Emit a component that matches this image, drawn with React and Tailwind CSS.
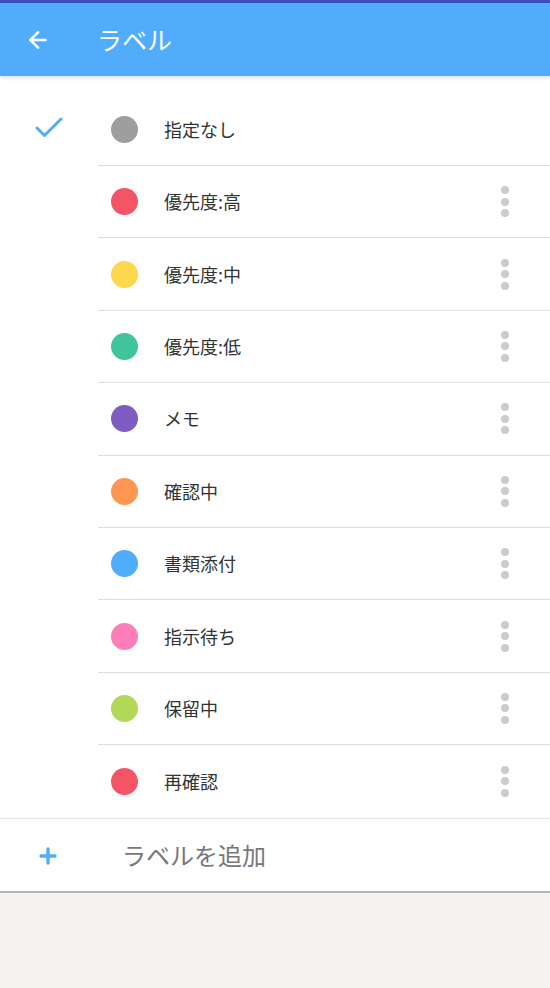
import { ArrowLeft, Check, Plus } from "lucide-react";

const labels = [
  { name: "優先度:高", color: "bg-[#f55366]" },
  { name: "優先度:中", color: "bg-[#fdd84c]" },
  { name: "優先度:低", color: "bg-[#3fc49b]" },
  { name: "メモ", color: "bg-[#7d5dc1]" },
  { name: "確認中", color: "bg-[#fe9652]" },
  { name: "書類添付", color: "bg-[#4fadfc]" },
  { name: "指示待ち", color: "bg-[#fc7fba]" },
  { name: "保留中", color: "bg-[#b0d957]" },
  { name: "再確認", color: "bg-[#f55366]" },
];

const Kebab = () => (
  <div className="flex flex-col items-center gap-[3.5px]">
    <span className="w-2 h-2 rounded-full bg-[#cccccc]" />
    <span className="w-2 h-2 rounded-full bg-[#cccccc]" />
    <span className="w-2 h-2 rounded-full bg-[#cccccc]" />
  </div>
);

const App = () => {
  return (
    <div
      className="min-h-[988px] bg-[#f5f4f2]"
      style={{ fontFamily: '"Noto Sans CJK JP", "Noto Sans", sans-serif' }}
    >
      <header className="relative z-10 h-[76px] bg-[#51adfc] border-t-[3px] border-[#3b4fbf] shadow-[0_2px_4px_rgba(0,0,0,0.12)] flex items-center">
        <div className="w-[97px] pl-[25px] flex items-center">
          <ArrowLeft size={26} strokeWidth={2.4} className="text-white" />
        </div>
        <h1 className="text-[25px] text-white leading-none">ラベル</h1>
      </header>

      <div className="bg-white pt-[17px]">
        <div className="flex items-center h-[73px]">
          <div className="w-[98px] pl-[31px] pb-[3px]">
            <Check size={36} strokeWidth={2} className="text-[#51adfc]" />
          </div>
          <div className="flex-1 h-full flex items-center border-b border-[#dedede]">
            <span className="w-[27px] h-[27px] rounded-full bg-[#9e9e9e] ml-[13px]" />
            <span className="ml-[26px] text-[18px] text-[#333333]">指定なし</span>
          </div>
        </div>

        {labels.map((label, i) => (
          <div key={label.name} className="flex items-center h-[72.4px] pl-[98px]">
            <div
              className={
                i === labels.length - 1
                  ? "flex-1 h-full flex items-center"
                  : "flex-1 h-full flex items-center border-b border-[#dedede]"
              }
            >
              <span className={`w-[27px] h-[27px] rounded-full ml-[13px] ${label.color}`} />
              <span className="ml-[26px] text-[18px] text-[#333333] flex-1">{label.name}</span>
              <div className="w-[52px] flex justify-center mr-[19px]">
                <Kebab />
              </div>
            </div>
          </div>
        ))}

        <div className="flex items-center h-[75px] border-t border-[#e8e8e8] border-b-2 border-b-[#b5b5b5]">
          <div className="w-[122px] pl-[36px] pt-[2px]">
            <Plus size={24} strokeWidth={3.4} className="text-[#4fadfc]" />
          </div>
          <span className="text-[24px] text-[#777777]">ラベルを追加</span>
        </div>
      </div>
    </div>
  );
};

export default App;
